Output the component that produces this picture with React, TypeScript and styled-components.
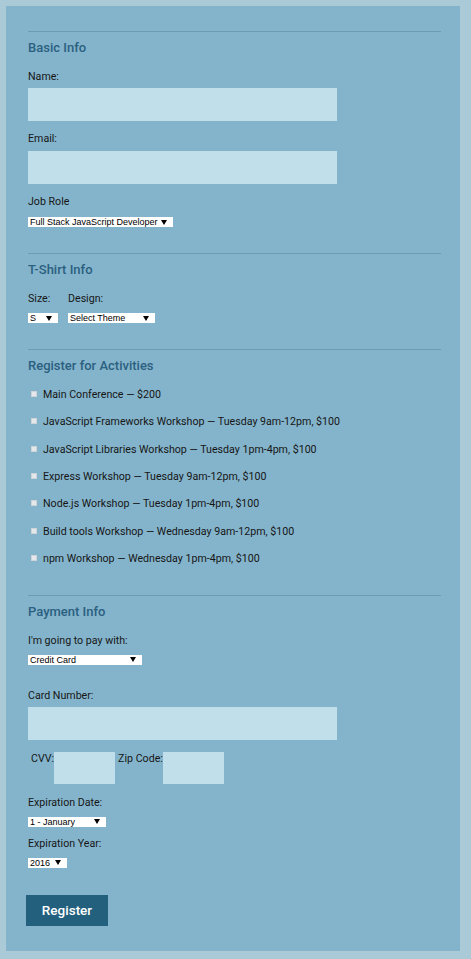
import React from "react";
import styled, { createGlobalStyle } from "styled-components";

const GlobalStyle = createGlobalStyle`
  html, body { margin: 0; padding: 0; }
  body {
    background: #abcad8;
    font-family: Roboto, "Liberation Sans", sans-serif;
  }
  * { box-sizing: border-box; }
`;

const Page = styled.div`
  padding: 6px 11px 8px 6px;
`;

const Panel = styled.form`
  width: 454px;
  background: #84b4cb;
  padding: 25px 19px 25px 22px;
  display: flex;
  flex-direction: column;
`;

const Section = styled.fieldset<{ $padBottom: number }>`
  margin: 0;
  border: none;
  border-top: 1px solid #6a9cb4;
  padding: 0 0 ${(p) => p.$padBottom}px 0;
  min-width: 0;
  display: flex;
  flex-direction: column;
  align-items: flex-start;
`;

const Heading = styled.h2`
  margin: 8px 0 14px;
  font-family: Roboto, sans-serif;
  font-weight: 500;
  font-size: 13px;
  line-height: 16px;
  color: #2b6080;
`;

const Label = styled.label<{ $mt?: number }>`
  display: block;
  margin-top: ${(p) => p.$mt ?? 0}px;
  font-family: Roboto, sans-serif;
  font-size: 10.65px;
  line-height: 13px;
  color: #161616;
`;

const TextInput = styled.input<{ $mt?: number }>`
  display: block;
  margin: ${(p) => p.$mt ?? 0}px 0 0;
  width: 309px;
  height: 33px;
  border: none;
  padding: 0 6px;
  background: #c1dfea;
  outline: none;
  font-family: Roboto, sans-serif;
  font-size: 11px;
`;

const SelectBox = styled.div<{ $w: number; $mt?: number }>`
  margin-top: ${(p) => p.$mt ?? 8}px;
  width: ${(p) => p.$w}px;
  height: 10px;
  background: #ffffff;
  display: flex;
  align-items: center;
  padding: 0 6px 0 2px;
`;

const Select = styled.select`
  appearance: none;
  -webkit-appearance: none;
  flex: 1;
  min-width: 0;
  height: 10px;
  border: none;
  padding: 0;
  margin: 0;
  background: transparent;
  outline: none;
  font-family: "Liberation Sans", Arial, sans-serif;
  font-size: 9px;
  line-height: 10px;
  color: #000;
`;

const Arrow = styled.span`
  flex: none;
  width: 0;
  height: 0;
  border-left: 3px solid transparent;
  border-right: 3px solid transparent;
  border-top: 5px solid #000;
`;

const Row = styled.div<{ $gap: number; $mt?: number }>`
  display: flex;
  align-items: flex-start;
  gap: ${(p) => p.$gap}px;
  margin-top: ${(p) => p.$mt ?? 0}px;
`;

const Column = styled.div`
  display: flex;
  flex-direction: column;
  align-items: flex-start;
`;

const ActivityList = styled.div`
  display: flex;
  flex-direction: column;
  gap: 14.33px;
`;

const Activity = styled.label`
  display: flex;
  align-items: center;
  font-family: Roboto, sans-serif;
  font-size: 10.65px;
  line-height: 13px;
  color: #161616;
`;

const Check = styled.input`
  appearance: none;
  -webkit-appearance: none;
  width: 6px;
  height: 6px;
  margin: 0 6px 1px 3px;
  border: 1px solid #cdd4d8;
  background: #e4e8ea;
`;

const InlineLabel = styled.label<{ $pl: number }>`
  font-family: Roboto, sans-serif;
  font-size: 10.65px;
  line-height: 13px;
  color: #161616;
  padding-left: ${(p) => p.$pl}px;
`;

const SmallInput = styled(TextInput)`
  width: 61px;
  height: 32px;
`;

const Button = styled.button`
  margin: 27px 0 0 -2px;
  width: 82px;
  height: 31px;
  border: none;
  background: #22607e;
  color: #ffffff;
  font-family: Roboto, sans-serif;
  font-weight: 500;
  font-size: 13.5px;
  align-self: flex-start;
  cursor: pointer;
`;

const DropDown = ({ w, mt, value }: { w: number; mt?: number; value: string }) => (
  <SelectBox $w={w} $mt={mt}>
    <Select defaultValue={value}>
      <option>{value}</option>
    </Select>
    <Arrow />
  </SelectBox>
);

const activities = [
  "Main Conference — $200",
  "JavaScript Frameworks Workshop — Tuesday 9am-12pm, $100",
  "JavaScript Libraries Workshop — Tuesday 1pm-4pm, $100",
  "Express Workshop — Tuesday 9am-12pm, $100",
  "Node.js Workshop — Tuesday 1pm-4pm, $100",
  "Build tools Workshop — Wednesday 9am-12pm, $100",
  "npm Workshop — Wednesday 1pm-4pm, $100",
];

export default function App() {
  return (
    <>
      <GlobalStyle />
      <Page>
        <Panel onSubmit={(e) => e.preventDefault()}>
          <Section $padBottom={26}>
            <Heading>Basic Info</Heading>
            <Label htmlFor="name">Name:</Label>
            <TextInput id="name" type="text" $mt={5} />
            <Label htmlFor="mail" $mt={11}>Email:</Label>
            <TextInput id="mail" type="email" $mt={6} />
            <Label $mt={11}>Job Role</Label>
            <DropDown w={145} mt={9} value="Full Stack JavaScript Developer" />
          </Section>

          <Section $padBottom={26}>
            <Heading>T-Shirt Info</Heading>
            <Row $gap={10}>
              <Column>
                <Label>Size:</Label>
                <DropDown w={30} value="S" />
              </Column>
              <Column>
                <Label>Design:</Label>
                <DropDown w={87} value="Select Theme" />
              </Column>
            </Row>
          </Section>

          <Section $padBottom={30}>
            <Heading>Register for Activities</Heading>
            <ActivityList>
              {activities.map((a) => (
                <Activity key={a}>
                  <Check type="checkbox" />
                  {a}
                </Activity>
              ))}
            </ActivityList>
          </Section>

          <Section $padBottom={0}>
            <Heading>Payment Info</Heading>
            <Label>I'm going to pay with:</Label>
            <DropDown w={114} value="Credit Card" />
            <Label htmlFor="cc-num" $mt={24}>Card Number:</Label>
            <TextInput id="cc-num" type="text" $mt={5} />
            <Row $gap={3} $mt={12}>
              <Row $gap={0}>
                <InlineLabel htmlFor="cvv" $pl={3}>CVV:</InlineLabel>
                <SmallInput id="cvv" type="text" />
              </Row>
              <Row $gap={0}>
                <InlineLabel htmlFor="zip" $pl={0}>Zip Code:</InlineLabel>
                <SmallInput id="zip" type="text" />
              </Row>
            </Row>
            <Label $mt={12}>Expiration Date:</Label>
            <DropDown w={78} value="1 - January" />
            <Label $mt={10}>Expiration Year:</Label>
            <DropDown w={39} value="2016" />
            <Button type="submit">Register</Button>
          </Section>
        </Panel>
      </Page>
    </>
  );
}
